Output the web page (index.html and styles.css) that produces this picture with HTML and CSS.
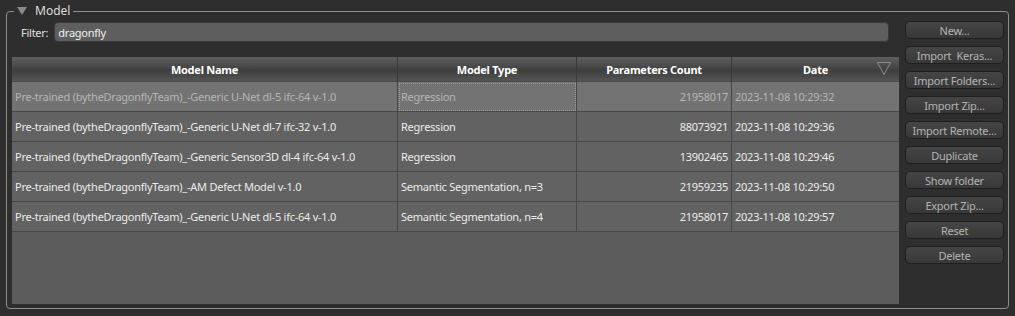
FILE: index.html
```html
<!DOCTYPE html>
<html lang="en">
<head>
  <meta charset="UTF-8">
  <title>Model</title>
  <link rel="stylesheet" href="styles.css">
</head>
<body>
  <fieldset class="group">
    <legend class="group-title">
      <svg class="collapse-icon" width="10" height="8" viewBox="0 0 10 8"><polygon points="0,0 10,0 5,8" fill="#8a8a8a"/></svg>
      <span>Model</span>
    </legend>

    <div class="panel">
      <div class="left-side">
        <div class="filter-row">
          <label class="filter-label" for="filterInput">Filter:</label>
          <input type="text" id="filterInput" class="filter-input" value="dragonfly">
        </div>

        <div class="table-wrap">
          <table class="model-table">
            <colgroup>
              <col class="col-name">
              <col class="col-type">
              <col class="col-params">
              <col class="col-date">
            </colgroup>
            <thead>
              <tr>
                <th>Model Name</th>
                <th>Model Type</th>
                <th>Parameters Count</th>
                <th class="sorted">Date
                  <svg class="sort-icon" width="14" height="13" viewBox="0 0 14 13"><polygon points="0.5,0.5 13.5,0.5 7,12.5" fill="none" stroke="#8c8c8c" stroke-width="1"/></svg>
                </th>
              </tr>
            </thead>
            <tbody>
              <tr class="selected">
                <td>Pre-trained (bytheDragonflyTeam)_-Generic U-Net dl-5 ifc-64 v-1.0</td>
                <td class="focused">Regression</td>
                <td class="num">21958017</td>
                <td>2023-11-08 10:29:32</td>
              </tr>
              <tr>
                <td>Pre-trained (bytheDragonflyTeam)_-Generic U-Net dl-7 ifc-32 v-1.0</td>
                <td>Regression</td>
                <td class="num">88073921</td>
                <td>2023-11-08 10:29:36</td>
              </tr>
              <tr>
                <td>Pre-trained (bytheDragonflyTeam)_-Generic Sensor3D dl-4 ifc-64 v-1.0</td>
                <td>Regression</td>
                <td class="num">13902465</td>
                <td>2023-11-08 10:29:46</td>
              </tr>
              <tr>
                <td>Pre-trained (bytheDragonflyTeam)_-AM Defect Model v-1.0</td>
                <td>Semantic Segmentation, n=3</td>
                <td class="num">21959235</td>
                <td>2023-11-08 10:29:50</td>
              </tr>
              <tr>
                <td>Pre-trained (bytheDragonflyTeam)_-Generic U-Net dl-5 ifc-64 v-1.0</td>
                <td>Semantic Segmentation, n=4</td>
                <td class="num">21958017</td>
                <td>2023-11-08 10:29:57</td>
              </tr>
            </tbody>
          </table>
        </div>
      </div>

      <div class="button-column">
        <button class="side-button">New...</button>
        <button class="side-button">Import&nbsp; Keras...</button>
        <button class="side-button">Import Folders...</button>
        <button class="side-button">Import Zip...</button>
        <button class="side-button">Import Remote...</button>
        <button class="side-button">Duplicate</button>
        <button class="side-button">Show folder</button>
        <button class="side-button">Export Zip...</button>
        <button class="side-button">Reset</button>
        <button class="side-button">Delete</button>
      </div>
    </div>
  </fieldset>
</body>
</html>
```

FILE: styles.css
```css
body {
  margin: 0;
  padding: 4px 6px 0 6px;
  font-family: "Noto Sans", "Open Sans", sans-serif;
  font-size: 11px;
  letter-spacing: -0.25px;
  background-color: #2e2e2e;
  color: #e4e4e4;
}
.group {
  margin: 0;
  padding: 3px 4px 4px 5px;
  border: 1px solid #8e8e8e;
  border-radius: 4px;
  min-width: 0;
}
.group-title {
  display: flex;
  align-items: center;
  gap: 8px;
  margin-left: 2px;
  padding: 0 3px 0 3px;
  font-size: 12px;
  line-height: 14px;
  letter-spacing: 0;
  color: #dcdcdc;
}
.collapse-icon {
  display: block;
}
.panel {
  display: flex;
  gap: 6px;
}
.left-side {
  flex: 1;
  display: flex;
  flex-direction: column;
  gap: 15px;
}
.filter-row {
  display: flex;
  align-items: center;
  gap: 6px;
  padding: 1px 10px 0 9px;
}
.filter-label {
  color: #e0e0e0;
}
.filter-input {
  flex: 1;
  height: 20px;
  box-sizing: border-box;
  padding: 0 3px;
  font-family: inherit;
  font-size: 11px;
  letter-spacing: inherit;
  color: #f0f0f0;
  background-color: #5e5e5e;
  border: 1px solid #3a3a3a;
  border-radius: 4px;
  outline: none;
}
.table-wrap {
  height: 247px;
  background-color: #5c5c5c;
}
.model-table {
  width: 100%;
  table-layout: fixed;
  border-collapse: separate;
  border-spacing: 0;
}
.col-name { width: 386px; }
.col-type { width: 179px; }
.col-params { width: 155px; }
.col-date { width: auto; }
.model-table th {
  position: relative;
  height: 24px;
  padding: 0;
  font-weight: bold;
  color: #ffffff;
  background: linear-gradient(#5e5e5e 0%, #4c4c4c 35%, #3e3e3e 55%, #4a4a4a 80%, #565656 100%);
  border-right: 1px solid #3a3a3a;
  border-bottom: 1px solid #4a4a4a;
}
.model-table th:last-child {
  border-right: none;
}
.sort-icon {
  position: absolute;
  top: 5px;
  right: 8px;
}
.model-table td {
  height: 29px;
  padding: 0 3px;
  white-space: nowrap;
  overflow: hidden;
  background-color: #626262;
  color: #ececec;
  border-right: 1px solid #474747;
  border-bottom: 1px solid #474747;
}
.model-table td:last-child {
  border-right: none;
}
.model-table td.num {
  text-align: right;
}
.model-table tr.selected td {
  background-color: #737373;
  color: #b6b6b6;
}
.model-table td.focused {
  outline: 1px dotted #9a9a9a;
  outline-offset: -2px;
}
.button-column {
  width: 99px;
  display: flex;
  flex-direction: column;
  gap: 7px;
}
.side-button {
  height: 18px;
  padding: 0;
  font-family: inherit;
  font-size: 11px;
  letter-spacing: inherit;
  color: #b4b4b4;
  background: linear-gradient(#454545, #383838);
  border: 1px solid #1f1f1f;
  border-radius: 5px;
  cursor: pointer;
}
```
